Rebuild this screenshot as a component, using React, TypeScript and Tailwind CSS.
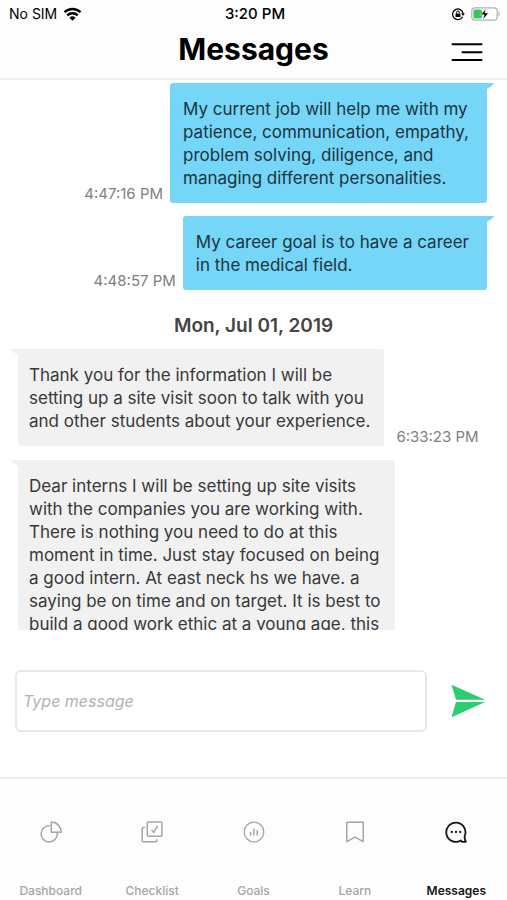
import type { ReactNode } from "react";
import clsx from "clsx";

type Message = {
  lines: string[];
  time: string;
  mine?: boolean;
};

const EARLIER: Message[] = [
  {
    mine: true,
    time: "4:47:16 PM",
    lines: [
      "My current job will help me with my",
      "patience, communication, empathy,",
      "problem solving, diligence, and",
      "managing different personalities.",
    ],
  },
  {
    mine: true,
    time: "4:48:57 PM",
    lines: ["My career goal is to have a career", "in the medical field."],
  },
];

const JULY_FIRST: Message[] = [
  {
    time: "6:33:23 PM",
    lines: [
      "Thank you for the information I will be",
      "setting up a site visit soon to talk with you",
      "and other students about your experience.",
    ],
  },
  {
    time: "",
    lines: [
      "Dear interns I will be setting up site visits",
      "with the companies you are working with.",
      "There is nothing you need to do at this",
      "moment in time. Just stay focused on being",
      "a good intern. At east neck hs we have. a",
      "saying be on time and on target. It is best to",
      "build a good work ethic at a young age, this",
    ],
  },
];

function StatusBar() {
  return (
    <div className="grid h-7 grid-cols-3 items-center pl-[9px] pr-1.5 leading-5">
      <div className="flex items-center gap-1.5 text-[14px]">
        <span>No SIM</span>
        <svg viewBox="0 0 20 15" className="h-3.5 w-[19px]" fill="none" stroke="currentColor" aria-hidden="true">
          <path d="M1.4 5.6a12.4 12.4 0 0 1 17.2 0" strokeWidth="2.5" />
          <path d="M4.4 9a8 8 0 0 1 11.2 0" strokeWidth="2.5" />
          <path d="M6.7 11.4a4.8 4.8 0 0 1 6.6 0L10 14.8z" fill="currentColor" stroke="none" />
        </svg>
      </div>
      <span className="text-center text-[15px] font-medium">3:20 PM</span>
      <div className="flex items-center justify-end gap-1.5">
        <svg viewBox="0 0 14 14" className="size-3.5" fill="none" stroke="currentColor" aria-hidden="true">
          <path d="M11.6 9.7a5.3 5.3 0 1 1 .5-3.3" strokeWidth="1.3" />
          <path d="M10.2 6.2h3.6L12 9z" fill="currentColor" stroke="none" />
          <rect x="4.5" y="6.4" width="5" height="3.6" rx=".5" fill="currentColor" stroke="none" />
          <path d="M5.6 6.6V5.4a1.4 1.4 0 0 1 2.8 0v1.2" strokeWidth="1" />
        </svg>
        <svg viewBox="0 0 30 14" className="h-3.5 w-[30px]" aria-hidden="true">
          <rect x=".8" y=".8" width="25.4" height="12.4" rx="3.4" fill="#fff" stroke="#b0b0b0" strokeWidth="1.2" />
          <path d="M27.5 4.6c1.6.5 1.6 4.3 0 4.8z" fill="#b0b0b0" />
          <rect x="2.4" y="2.4" width="8.6" height="9.2" rx="1.8" fill="#35c759" />
          <path d="M15.2 1.2 9.6 7.8h3.6l-1.4 5 5.8-6.8h-3.7z" fill="#000" stroke="#fff" strokeWidth=".6" />
        </svg>
      </div>
    </div>
  );
}

function Header() {
  return (
    <header className="shrink-0 border-b-2 border-[#efefef] bg-[#fdfdfd]">
      <StatusBar />
      <div className="grid h-[50px] grid-cols-[1fr_auto_1fr] items-start px-6">
        <h1 className="col-start-2 text-[30px] font-bold leading-[42px]">Messages</h1>
        <button type="button" aria-label="Menu" className="mt-3.5 justify-self-end">
          <svg viewBox="0 0 32 20" className="h-5 w-8" stroke="currentColor" strokeWidth="2" strokeLinecap="round" aria-hidden="true">
            <path d="M1.5 2.2h29M11.5 10.2h19M1.5 18h29" />
          </svg>
        </button>
      </div>
    </header>
  );
}

function Bubble({ lines, time, mine }: Message) {
  return (
    <div className={clsx("flex items-end", mine ? "flex-row-reverse gap-[7px] pr-5" : "gap-3 pl-[18px]")}>
      <div
        className={clsx(
          "relative whitespace-pre-line rounded-[3px] pb-[13px] pt-[15px] text-[17px] leading-[23px]",
          mine
            ? "rounded-tr-none bg-[#75d6f7] pl-[13px] pr-[18px] text-[#1b343d]"
            : "rounded-tl-none bg-[#f1f1f1] pl-[11px] pr-3.5 text-[#383838]",
        )}
      >
        <svg
          viewBox="0 0 8 6"
          className={clsx(
            "absolute top-0 h-1.5 w-2",
            mine ? "left-full text-[#75d6f7]" : "right-full -scale-x-100 text-[#f1f1f1]",
          )}
          aria-hidden="true"
        >
          <path d="M0 0h7.500C6 1 5.500 2.500 3.600 3.800 2.400 4.700 1 4.800 0 6z" fill="currentColor" />
        </svg>
        {lines.join("\n")}
      </div>
      {time && <time className="pb-px text-[15px] leading-[17px] text-[#808080]">{time}</time>}
    </div>
  );
}

function Composer() {
  return (
    <form className="flex shrink-0 items-center gap-6 px-[15px] pb-[45px] pt-10" onSubmit={(event) => event.preventDefault()}>
      <input
        type="text"
        aria-label="Type message"
        placeholder="Type message"
        className="h-[62px] min-w-0 flex-1 rounded-md border-2 border-[#e7e7e7] bg-white px-1.5 text-[16px] outline-none placeholder:italic placeholder:text-[#b2b2b2]"
      />
      <button type="submit" aria-label="Send" className="mr-1.5">
        <svg viewBox="0 0 35 34" className="h-[34px] w-[35px] text-[#2ecc71]" fill="currentColor" aria-hidden="true">
          <path d="M.5.800 34.200 15.800H5z" />
          <path d="M.5 33.200 34.200 18H5z" />
        </svg>
      </button>
    </form>
  );
}

type TabProps = {
  label: string;
  active?: boolean;
  children: ReactNode;
};

function Tab({ label, active, children }: TabProps) {
  return (
    <a
      href="#"
      aria-current={active ? "page" : undefined}
      className={clsx("flex flex-1 flex-col items-center gap-10", active ? "font-semibold text-[#161616]" : "font-medium text-[#a5a5a5]")}
    >
      <svg viewBox="0 0 22 22" className="size-[22px] shrink-0" fill="none" stroke="currentColor" strokeWidth="1.5" strokeLinejoin="round" strokeLinecap="round" aria-hidden="true">
        {children}
      </svg>
      <span className="text-[12px] leading-4">{label}</span>
    </a>
  );
}

function TabBar() {
  return (
    <nav className="flex shrink-0 border-t-2 border-[#ededed] bg-[#fdfdfd] pb-px pt-[42px]">
      <Tab label="Dashboard">
        <path d="M9.300 4.700a8.100 8.100 0 1 0 8 8.300v-1.700" />
        <path d="M11.300 1.100v10.200h9.800A9.800 9.800 0 0 0 11.300 1.100z" />
      </Tab>
      <Tab label="Checklist">
        <rect x="6.300" y="1" width="14.600" height="14.200" rx="1" />
        <path d="M3.400 6.400H2.200a1 1 0 0 0-1 1v12.400a1 1 0 0 0 1 1h12.600a1 1 0 0 0 1-1v-1" />
        <path d="m10.900 9.400 1.900 2 3.500-6" />
      </Tab>
      <Tab label="Goals">
        <circle cx="11" cy="11" r="9.800" strokeWidth="1.300" />
        <path d="M7.600 11.500V14M10.900 8v6M14.300 9.800V14" />
      </Tab>
      <Tab label="Learn">
        <path d="M2.800 1.200h16.400v19.400L11 16.200l-8.200 4.400z" />
      </Tab>
      <Tab label="Messages" active>
        <path d="M20.800 20.800h-3.700l-1.300-1.300A9.600 9.600 0 1 1 19.700 15c-.3 2 .1 3.900 1.100 5.800z" strokeWidth="1.800" />
        <path d="M6.800 11h.01M11 11h.01M15.200 11h.01" strokeWidth="2.300" />
      </Tab>
    </nav>
  );
}

export default function App() {
  return (
    <div className="flex h-screen flex-col overflow-hidden bg-white font-['Inter','Liberation_Sans',sans-serif] text-black">
      <Header />
      <main className="flex min-h-0 flex-1 flex-col overflow-hidden pt-[3px]">
        <div className="flex flex-col gap-[13px]">
          {EARLIER.map((message) => (
            <Bubble key={message.time} {...message} />
          ))}
        </div>
        <h2 className="py-6 text-center text-[19px] font-semibold leading-[23px] text-[#444]">Mon, Jul 01, 2019</h2>
        <div className="-mt-3 flex flex-col gap-3.5">
          {JULY_FIRST.map((message) => (
            <Bubble key={message.lines[0]} {...message} />
          ))}
        </div>
      </main>
      <Composer />
      <TabBar />
    </div>
  );
}
